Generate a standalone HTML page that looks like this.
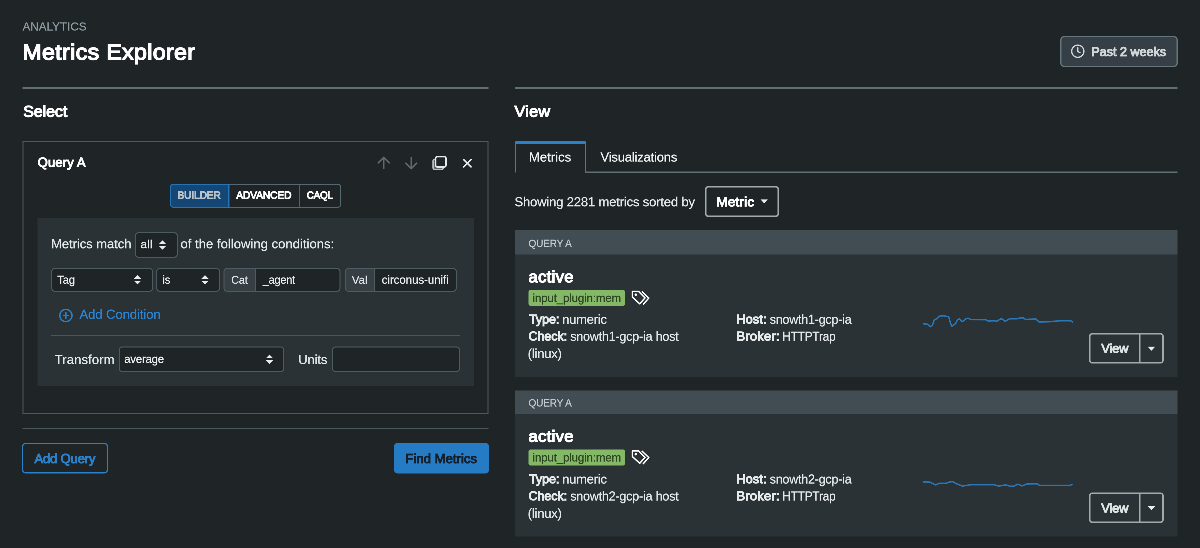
<!DOCTYPE html>
<html lang="en">
<head>
<meta charset="utf-8">
<title>Metrics Explorer</title>
<style>
*{box-sizing:border-box;margin:0;padding:0}
html,body{width:1200px;height:548px;overflow:hidden;background:#1f2427;color:#e9edee;
  font-family:"Liberation Sans","DejaVu Sans",sans-serif;font-size:52px;}
#app{position:absolute;left:0;top:0;width:4800px;height:2192px;overflow:hidden;transform-origin:0 0;transform:scale(0.25);will-change:transform}
#app div,#app svg,#app span,#app h1,#app h2,#app button{position:absolute}
#app h1,#app h2{left:0;top:0;font-size:inherit;font-weight:normal}
.t{white-space:nowrap;line-height:1;transform-origin:0 50%;font-weight:normal;-webkit-text-stroke-color:currentColor}
.hr{height:5px;background:#5f6f74}
.hr2{height:5px;background:#4a585d}
.box{border:4.6px solid #4d5c60;border-radius:14px;background:#1f2427}
.addon{background:#353f44;border-right:4.6px solid #4d5c60}
.panel{background:#2a3236}
</style>
</head>
<body>
<div id="app">
  <!-- page header -->
  <header>
    <span class="t" id="t-kicker" style="left:90.4px;top:83px;font-size:46px;letter-spacing:0.43px;-webkit-text-stroke-width:0.8px;color:#8d9ba1">ANALYTICS</span>
    <h1><span class="t sb" id="t-title" style="left:89.56px;top:165px;font-size:87.6px;letter-spacing:1.75px;-webkit-text-stroke-width:4.66px;transform:scaleX(1.047);color:#ffffff">Metrics Explorer</span></h1>
    <div style="left:4241px;top:144px;width:470px;height:124px;background:#353f45;border:5px solid #66757b;border-radius:16px"></div>
    <svg style="left:4280px;top:173px" width="64" height="64" viewBox="0 0 16 16"><circle cx="7.8" cy="8" r="6.1" fill="none" stroke="#cfd6d8" stroke-width="1.3"/><path d="M7.8 4.6V8.2L10 9.5" fill="none" stroke="#cfd6d8" stroke-width="1.3" stroke-linecap="round" stroke-linejoin="round"/></svg>
    <span class="t sb" id="t-past" style="left:4365.2px;top:182px;font-size:50px;letter-spacing:0.16px;-webkit-text-stroke-width:3.38px;color:#cfd6d8">Past 2 weeks</span>
  </header>

  <!-- left column: Select -->
  <section>
    <div class="hr" style="left:90px;top:348.2px;width:1864px;height:7.4px"></div>
    <h2><span class="t sb" id="t-h2a" style="left:93.2px;top:414px;font-size:63.2px;letter-spacing:0.04px;-webkit-text-stroke-width:3.83px;color:#ffffff">Select</span></h2>
    <div style="left:89.6px;top:564.8px;width:1864.8px;height:1092.4px;border:4.8px solid #4c5a5e"></div>
    <span class="t sb" id="t-qa" style="left:151px;top:624px;font-size:51.6px;letter-spacing:0.8px;-webkit-text-stroke-width:3.43px;color:#ffffff">Query A</span>
    <svg style="left:1500px;top:616px" width="400" height="72" viewBox="0 0 100 18">
      <g fill="none" stroke="#5f6a6f" stroke-width="1.55" stroke-linecap="round" stroke-linejoin="round">
        <path d="M8.7 14.5V4M3.3 8.8L8.7 3.4L14.1 8.8"/>
        <path d="M36.3 3.5V14M30.9 9.2L36.3 14.6L41.7 9.2"/>
      </g>
      <g fill="none" stroke="#e6eaeb" stroke-width="1.5" stroke-linejoin="round">
        <rect x="58.1" y="5.3" width="10.2" height="10.2" rx="1.8" stroke="#b9c0c2" fill="#5a6266"/>
        <rect x="60.6" y="2.6" width="10.4" height="10.4" rx="1.8" fill="#1f2427"/>
        <path d="M88.7 5.6L96 12.9M96 5.6L88.7 12.9" stroke-linecap="round" stroke-width="1.6"/>
      </g>
    </svg>

    <div style="left:680px;top:735.2px;width:685.2px;height:96px;border:4.4px solid #566870;border-radius:14px;overflow:hidden">
      <div style="left:230.4px;top:0;width:4px;height:88px;background:#52626a"></div>
      <div style="left:513.2px;top:0;width:4px;height:88px;background:#52626a"></div>
    </div>
    <div style="left:680px;top:735.2px;width:235.2px;height:96px;background:#144776;border:4.4px solid #2674b8;border-radius:14px 0 0 14px"></div>
    <span class="t sb" id="t-seg1" style="left:710.05px;top:760px;font-size:41.6px;letter-spacing:-0.5px;-webkit-text-stroke-width:3.09px;transform:scaleX(0.977);color:#b9c3cb">BUILDER</span><span class="t sb" id="t-seg2" style="left:945.17px;top:760px;font-size:41.6px;letter-spacing:-0.5px;-webkit-text-stroke-width:3.09px;transform:scaleX(0.984);color:#ffffff">ADVANCED</span><span class="t sb" id="t-seg3" style="left:1227.2px;top:760px;font-size:41.6px;letter-spacing:-0.5px;-webkit-text-stroke-width:3.09px;transform:scaleX(0.939);color:#ffffff">CAQL</span>

    <div class="panel" style="left:150px;top:873.2px;width:1746px;height:670px"></div>
    <span class="t" id="t-mm" style="left:204.4px;top:949px;font-size:52px;letter-spacing:-0.18px;-webkit-text-stroke-width:0.8px;color:#e3e7e8">Metrics match</span>
    <div class="box" style="left:540px;top:929.2px;width:171.2px;height:102px"></div>
    <span class="t" id="t-all" style="left:562.2px;top:954px;font-size:46px;letter-spacing:0.9px;-webkit-text-stroke-width:0.8px;color:#e9edee">all</span>
    <svg style="left:634.4px;top:960px" width="32" height="40" viewBox="0 0 8 10"><path d="M0.4 4L4 0.4L7.6 4ZM0.4 6L4 9.6L7.6 6Z" fill="#e9edee"/></svg>
    <span class="t" id="t-of" style="left:722px;top:949px;font-size:52px;letter-spacing:0.18px;-webkit-text-stroke-width:0.8px;color:#e3e7e8">of the following conditions:</span>

    <div class="box" style="left:204.8px;top:1071.6px;width:407.2px;height:95.2px"></div>
    <span class="t" id="t-tag" style="left:228.8px;top:1096px;font-size:46px;letter-spacing:-0.55px;-webkit-text-stroke-width:0.8px;transform:scaleX(0.976);color:#e9edee">Tag</span>
    <svg style="left:534px;top:1098.8px" width="32" height="40" viewBox="0 0 8 10"><path d="M0.4 4L4 0.4L7.6 4ZM0.4 6L4 9.6L7.6 6Z" fill="#e9edee"/></svg>
    <div class="box" style="left:624.8px;top:1071.6px;width:255.2px;height:95.2px"></div>
    <span class="t" id="t-is" style="left:650.1px;top:1096px;font-size:46px;letter-spacing:-0.55px;-webkit-text-stroke-width:0.8px;transform:scaleX(0.951);color:#e9edee">is</span>
    <svg style="left:804px;top:1098.8px" width="32" height="40" viewBox="0 0 8 10"><path d="M0.4 4L4 0.4L7.6 4ZM0.4 6L4 9.6L7.6 6Z" fill="#e9edee"/></svg>
    <div class="box" style="left:894px;top:1071.6px;width:468px;height:95.2px;overflow:hidden"><div class="addon" style="left:0;top:0;width:124.8px;height:92px"></div></div>
    <span class="t" id="t-cat" style="left:925.29px;top:1097px;font-size:45.2px;letter-spacing:-0.54px;-webkit-text-stroke-width:0.8px;transform:scaleX(0.954);color:#dfe4e6">Cat</span><span class="t" id="t-agent" style="left:1050.94px;top:1096px;font-size:46px;letter-spacing:-0.55px;-webkit-text-stroke-width:0.8px;transform:scaleX(0.939);color:#e9edee">_agent</span>
    <div class="box" style="left:1380px;top:1071.6px;width:447.2px;height:95.2px;overflow:hidden"><div class="addon" style="left:0;top:0;width:117.2px;height:92px"></div></div>
    <span class="t" id="t-val" style="left:1407.2px;top:1097px;font-size:45.2px;letter-spacing:0.4px;-webkit-text-stroke-width:0.8px;color:#dfe4e6">Val</span><span class="t" id="t-circ" style="left:1527px;top:1096px;font-size:46px;letter-spacing:-0.25px;-webkit-text-stroke-width:0.8px;color:#e9edee">circonus-unifi</span>

    <svg style="left:232px;top:1230.4px" width="64" height="64" viewBox="0 0 16 16"><circle cx="7.9" cy="8" r="6.1" fill="none" stroke="#2b80c9" stroke-width="1.4"/><path d="M7.9 4.8V11.2M4.7 8H11.1" stroke="#2b80c9" stroke-width="1.4" fill="none"/></svg>
    <span class="t" id="t-addc" style="left:318px;top:1231px;font-size:52px;letter-spacing:-0.17px;-webkit-text-stroke-width:0.8px;color:#2d84d0">Add Condition</span>
    <div class="hr2" style="left:204.8px;top:1340px;width:1635.2px"></div>

    <span class="t" id="t-tr" style="left:219px;top:1412px;font-size:52px;letter-spacing:0.52px;-webkit-text-stroke-width:0.8px;color:#e3e7e8">Transform</span>
    <div class="box" style="left:475.2px;top:1386.4px;width:662px;height:101.2px"></div>
    <span class="t" id="t-avg" style="left:497.02px;top:1413px;font-size:46px;letter-spacing:-0.55px;-webkit-text-stroke-width:0.8px;transform:scaleX(0.978);color:#e9edee">average</span>
    <svg style="left:1062px;top:1416.8px" width="32" height="40" viewBox="0 0 8 10"><path d="M0.4 4L4 0.4L7.6 4ZM0.4 6L4 9.6L7.6 6Z" fill="#e9edee"/></svg>
    <span class="t" id="t-units" style="left:1193px;top:1412px;font-size:52px;letter-spacing:-0.5px;-webkit-text-stroke-width:0.8px;color:#e3e7e8">Units</span>
    <div class="box" style="left:1328px;top:1386.4px;width:512px;height:101.2px"></div>

    <div class="hr2" style="left:90px;top:1712px;width:1864px"></div>
    <div style="left:88.4px;top:1770.8px;width:343.2px;height:123.6px;border:5.6px solid #2b80c9;border-radius:15.2px"></div>
    <span class="t sb" id="t-addq" style="left:138px;top:1809px;font-size:51.6px;letter-spacing:-0.38px;-webkit-text-stroke-width:3.43px;color:#2b80c9">Add Query</span>
    <div style="left:1576px;top:1770.8px;width:379.6px;height:123.6px;background:#267bc5;border-radius:15.2px"></div>
    <span class="t sb" id="t-findm" style="left:1622px;top:1809px;font-size:51.6px;letter-spacing:0.45px;-webkit-text-stroke-width:3.43px;color:#15222d">Find Metrics</span>
  </section>

  <!-- right column: View -->
  <section>
    <div class="hr" style="left:2060px;top:348.2px;width:2650px;height:7.4px"></div>
    <h2><span class="t sb" id="t-h2b" style="left:2058.44px;top:414px;font-size:63.2px;letter-spacing:1.26px;-webkit-text-stroke-width:3.83px;transform:scaleX(1.019);color:#ffffff">View</span></h2>
    <div class="hr" style="left:2340px;top:686px;width:2370px"></div>
    <div style="left:2060px;top:564.8px;width:284px;height:125.2px;border:4.8px solid #64737a;border-bottom:0;border-top:10.4px solid #2b80c9;border-radius:4px 4px 0 0"></div>
    <span class="t" id="t-tab1" style="left:2116px;top:602px;font-size:52px;letter-spacing:0.2px;-webkit-text-stroke-width:0.8px;color:#eef1f2">Metrics</span><span class="t" id="t-tab2" style="left:2402px;top:602px;font-size:52px;letter-spacing:-0.62px;-webkit-text-stroke-width:0.8px;transform:scaleX(0.994);color:#eef1f2">Visualizations</span>
    <span class="t" id="t-show" style="left:2058px;top:781px;font-size:52px;letter-spacing:-0.62px;-webkit-text-stroke-width:0.8px;color:#e3e7e8">Showing 2281 metrics sorted by</span>
    <div style="left:2819.6px;top:744px;width:296px;height:123.6px;border:6px solid #a0aaad;border-radius:13.2px"></div>
    <span class="t sb" id="t-metric" style="left:2865.94px;top:782px;font-size:51.6px;letter-spacing:1.03px;-webkit-text-stroke-width:3.43px;transform:scaleX(1.032);color:#ffffff">Metric</span>
    <svg style="left:3041.2px;top:796.8px" width="32" height="20" viewBox="0 0 8 5"><path d="M0.3 0.2H7.5L3.9 4.1Z" fill="#e9edee"/></svg>

    <article>
      <div style="left:2060px;top:921.2px;width:2650px;height:98px;background:#414d52"></div>
      <div class="panel" style="left:2060px;top:1018px;width:2650px;height:489.2px"></div>
      <span class="t" id="t-c1h" style="left:2114.25px;top:953px;font-size:42px;letter-spacing:-0.5px;-webkit-text-stroke-width:0.8px;transform:scaleX(0.950);color:#c0c9cc">QUERY A</span><span class="t sb" id="t-c1n" style="left:2114.19px;top:1074px;font-size:65.6px;letter-spacing:1.31px;-webkit-text-stroke-width:3.91px;transform:scaleX(1.012);color:#ffffff">active</span>
      <div style="left:2113.6px;top:1160px;width:386.4px;height:63.2px;background:#85b866;border-radius:8px"></div>
      <span class="t" id="t-c1t" style="left:2130.04px;top:1169px;font-size:46.8px;letter-spacing:-0.56px;-webkit-text-stroke-width:0.8px;transform:scaleX(0.982);color:#2b4622">input_plugin:mem</span>
      <svg style="left:2524px;top:1158px" width="80" height="68" viewBox="0 0 20 17"><g fill="none" stroke="#fff" stroke-width="1.45" stroke-linejoin="round"><path d="M1.4 1.9H7.6L14 8.4L8.7 14.3L1.4 7.6Z"/><path d="M10.8 1.9L17.8 8.6L12 15"/></g><circle cx="4.8" cy="5.2" r="1.25" fill="#fff"/></svg>
      <span class="t sb" id="t-c1ty" style="left:2116.2px;top:1252px;font-size:49.2px;letter-spacing:0.25px;-webkit-text-stroke-width:3.35px;color:#e6eaeb">Type:</span><span class="t" id="t-c1tyv" style="left:2249.44px;top:1251px;font-size:52px;letter-spacing:-0.62px;-webkit-text-stroke-width:0.8px;transform:scaleX(0.986);color:#e3e7e8">numeric</span><span class="t sb" id="t-c1ch" style="left:2114.2px;top:1320px;font-size:49.2px;letter-spacing:0.24px;-webkit-text-stroke-width:3.35px;color:#e6eaeb">Check:</span><span class="t" id="t-c1chv" style="left:2281.05px;top:1319px;font-size:52px;letter-spacing:-0.62px;-webkit-text-stroke-width:0.8px;transform:scaleX(0.955);color:#e3e7e8">snowth1-gcp-ia host</span><span class="t" id="t-c1li" style="left:2111.03px;top:1388px;font-size:52px;letter-spacing:-0.62px;-webkit-text-stroke-width:0.8px;transform:scaleX(0.989);color:#e3e7e8">(linux)</span><span class="t sb" id="t-c1ho" style="left:2945.98px;top:1252px;font-size:49.2px;letter-spacing:0.98px;-webkit-text-stroke-width:3.35px;transform:scaleX(1.011);color:#e6eaeb">Host:</span><span class="t" id="t-c1hov" style="left:3079.05px;top:1251px;font-size:52px;letter-spacing:-0.62px;-webkit-text-stroke-width:0.8px;transform:scaleX(0.951);color:#e3e7e8">snowth1-gcp-ia</span><span class="t sb" id="t-c1br" style="left:2945.91px;top:1320px;font-size:49.2px;letter-spacing:0.98px;-webkit-text-stroke-width:3.35px;transform:scaleX(1.046);color:#e6eaeb">Broker:</span><span class="t" id="t-c1brv" style="left:3129.19px;top:1319px;font-size:52px;letter-spacing:-0.62px;-webkit-text-stroke-width:0.8px;transform:scaleX(0.904);color:#e3e7e8">HTTPTrap</span>
      <svg style="left:3660px;top:1220px" width="680" height="120" viewBox="0 0 170 30"><path d="M8 18.8L12.5 19.2L15.3 21.7L17.5 20L19.2 15L21.7 13.7L24.2 11.2L28.3 10.8L33.7 11.7L35.3 17.5L36.7 21.3L38.7 20L40.8 18.3L42.5 14.7L44.5 13.8L47 16.7L48.7 15.8L50.8 13.7L53.3 13.3L55.8 14.5L70.8 14.7L73 16L80 15.8L81.7 16.3L85.8 13.8L87.5 14.2L90 16.3L92.5 15L94.7 13.7L101.7 13.8L105.8 12.8L108.3 13L110.8 14.5L115 14.2L120.8 14L124.2 17L133.3 16.8L145 15.8L155.8 15.8L158 17.2" fill="none" stroke="#2977b7" stroke-width="1.45" stroke-linejoin="round"/></svg>
      <div style="left:4356px;top:1331.6px;width:299.2px;height:122.4px;border:6px solid #a0aaad;border-radius:13.2px"></div>
      <div style="left:4554.8px;top:1332px;width:7.6px;height:121.2px;background:#a0aaad"></div>
      <span class="t sb" id="t-c1v" style="left:4405.2px;top:1369px;font-size:50.8px;letter-spacing:-0.33px;-webkit-text-stroke-width:3.41px;color:#dde2e3">View</span>
      <svg style="left:4590.4px;top:1386px" width="32" height="20" viewBox="0 0 8 5"><path d="M0.2 0.2H7.7L3.95 4.2Z" fill="#e9edee"/></svg>
    </article>

    <article>
      <div style="left:2060px;top:1562.4px;width:2650px;height:95.2px;background:#414d52"></div>
      <div class="panel" style="left:2060px;top:1656.4px;width:2650px;height:489.2px"></div>
      <span class="t" id="t-c2h" style="left:2114.25px;top:1591px;font-size:42px;letter-spacing:-0.5px;-webkit-text-stroke-width:0.8px;transform:scaleX(0.950);color:#c0c9cc">QUERY A</span><span class="t sb" id="t-c2n" style="left:2114.19px;top:1712px;font-size:65.6px;letter-spacing:1.31px;-webkit-text-stroke-width:3.91px;transform:scaleX(1.012);color:#ffffff">active</span>
      <div style="left:2113.6px;top:1798.4px;width:386.4px;height:63.2px;background:#85b866;border-radius:8px"></div>
      <span class="t" id="t-c2t" style="left:2130.04px;top:1807px;font-size:46.8px;letter-spacing:-0.56px;-webkit-text-stroke-width:0.8px;transform:scaleX(0.982);color:#2b4622">input_plugin:mem</span>
      <svg style="left:2524px;top:1796.4px" width="80" height="68" viewBox="0 0 20 17"><g fill="none" stroke="#fff" stroke-width="1.45" stroke-linejoin="round"><path d="M1.4 1.9H7.6L14 8.4L8.7 14.3L1.4 7.6Z"/><path d="M10.8 1.9L17.8 8.6L12 15"/></g><circle cx="4.8" cy="5.2" r="1.25" fill="#fff"/></svg>
      <span class="t sb" id="t-c2ty" style="left:2116.2px;top:1891px;font-size:49.2px;letter-spacing:0.25px;-webkit-text-stroke-width:3.35px;color:#e6eaeb">Type:</span><span class="t" id="t-c2tyv" style="left:2249.44px;top:1890px;font-size:52px;letter-spacing:-0.62px;-webkit-text-stroke-width:0.8px;transform:scaleX(0.986);color:#e3e7e8">numeric</span><span class="t sb" id="t-c2ch" style="left:2114.2px;top:1959px;font-size:49.2px;letter-spacing:0.24px;-webkit-text-stroke-width:3.35px;color:#e6eaeb">Check:</span><span class="t" id="t-c2chv" style="left:2281.05px;top:1958px;font-size:52px;letter-spacing:-0.62px;-webkit-text-stroke-width:0.8px;transform:scaleX(0.955);color:#e3e7e8">snowth2-gcp-ia host</span><span class="t" id="t-c2li" style="left:2111.03px;top:2027px;font-size:52px;letter-spacing:-0.62px;-webkit-text-stroke-width:0.8px;transform:scaleX(0.989);color:#e3e7e8">(linux)</span><span class="t sb" id="t-c2ho" style="left:2945.98px;top:1891px;font-size:49.2px;letter-spacing:0.98px;-webkit-text-stroke-width:3.35px;transform:scaleX(1.011);color:#e6eaeb">Host:</span><span class="t" id="t-c2hov" style="left:3079.05px;top:1890px;font-size:52px;letter-spacing:-0.62px;-webkit-text-stroke-width:0.8px;transform:scaleX(0.951);color:#e3e7e8">snowth2-gcp-ia</span><span class="t sb" id="t-c2br" style="left:2945.91px;top:1959px;font-size:49.2px;letter-spacing:0.98px;-webkit-text-stroke-width:3.35px;transform:scaleX(1.046);color:#e6eaeb">Broker:</span><span class="t" id="t-c2brv" style="left:3129.19px;top:1958px;font-size:52px;letter-spacing:-0.62px;-webkit-text-stroke-width:0.8px;transform:scaleX(0.904);color:#e3e7e8">HTTPTrap</span>
      <svg style="left:3660px;top:1858.4px" width="680" height="120" viewBox="0 0 170 30"><path d="M7.8 17.4L14.8 17.6L20.7 20.4L24.2 18.8L31.2 18.8L34.7 17.4L38.2 17.2L40.5 18.8L47.5 21.6L55.7 20.2L79 20.2L83.7 21.6L90.7 20.4L95.3 21.8L98.8 21.6L102.8 19.7L107 21.4L111.7 19.5L122.2 19.3L124.5 20.9L154.8 20.9L157.6 19.7" fill="none" stroke="#2977b7" stroke-width="1.45" stroke-linejoin="round"/></svg>
      <div style="left:4356px;top:1970px;width:299.2px;height:122.4px;border:6px solid #a0aaad;border-radius:13.2px"></div>
      <div style="left:4554.8px;top:1970.4px;width:7.6px;height:121.2px;background:#a0aaad"></div>
      <span class="t sb" id="t-c2v" style="left:4405.2px;top:2008px;font-size:50.8px;letter-spacing:-0.33px;-webkit-text-stroke-width:3.41px;color:#dde2e3">View</span>
      <svg style="left:4590.4px;top:2024.4px" width="32" height="20" viewBox="0 0 8 5"><path d="M0.2 0.2H7.7L3.95 4.2Z" fill="#e9edee"/></svg>
    </article>
  </section>
</div>
</body>
</html>
